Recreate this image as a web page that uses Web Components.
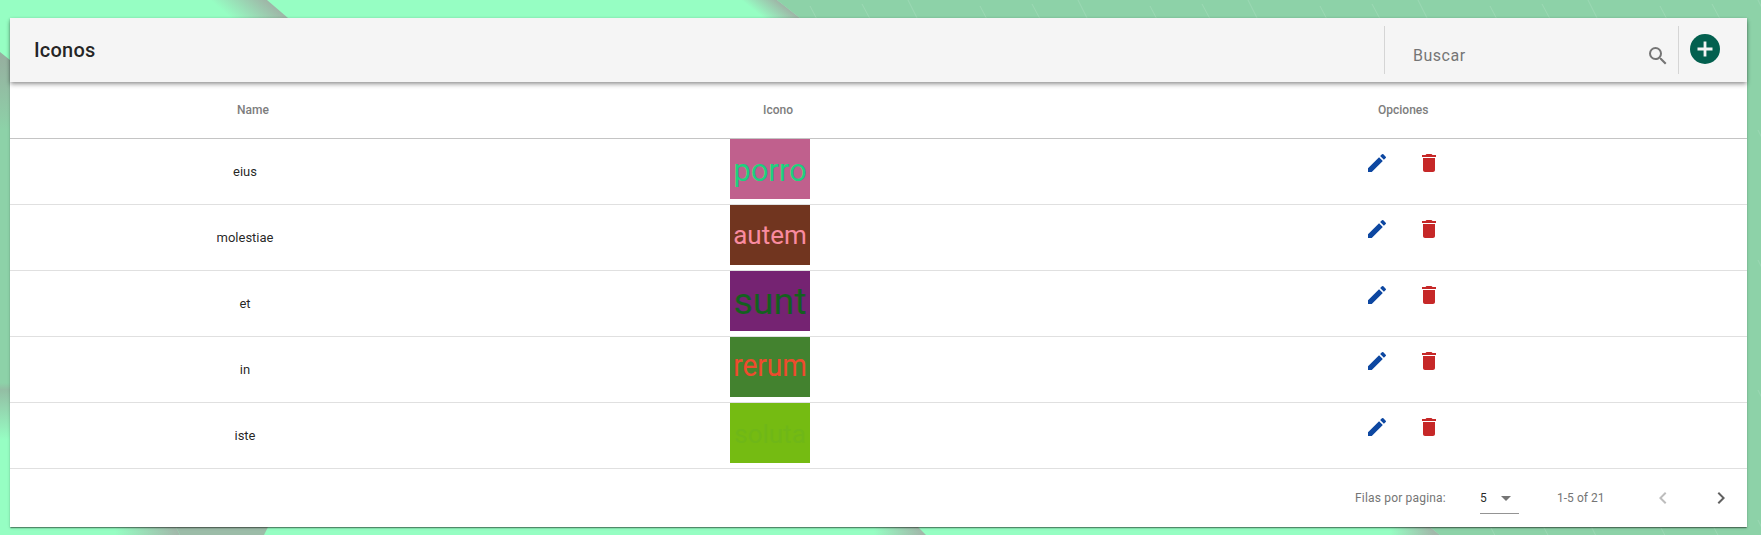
<!DOCTYPE html>
<html lang="es">
<head>
<meta charset="utf-8">
<title>Iconos</title>
<style>
html, body { margin: 0; height: 100%; }
body {
    font-family: Roboto, "Liberation Sans", sans-serif;
    overflow: hidden;
    background-color: #96fec3;
}
</style>
</head>
<body>
<page-bg>
    <icon-table title="Iconos" range="1-5 of 21">
        <icon-row name="eius" word="porro" bg="#c0608d" fg="#1fd07f" size="31"></icon-row>
        <icon-row name="molestiae" word="autem" bg="#71351f" fg="#f98ba0" size="26" dy="-1"></icon-row>
        <icon-row name="et" word="sunt" bg="#752372" fg="#14601f" size="37.5" dy="-1"></icon-row>
        <icon-row name="in" word="rerum" bg="#43822f" fg="#ee4b2d" size="28" dy="-2.5" sy="1.1"></icon-row>
        <icon-row name="iste" word="soluta" bg="#75bb12" fg="#6fb718" size="26"></icon-row>
    </icon-table>
</page-bg>
<script>
// Wallpaper behind the card
class PageBg extends HTMLElement {
    constructor() {
        super();
        this.attachShadow({ mode: 'open' });
        this.shadowRoot.innerHTML = `
            <style>
                :host {
                    display: block;
                    box-sizing: border-box;
                    width: 1761px;
                    height: 535px;
                    padding: 18px 14px 8px 10px;
                    position: relative;
                    overflow: hidden;
                    background: #96fec3;
                }
                svg { position: absolute; inset: 0; }
                slot { display: block; position: relative; }
            </style>
            <svg width="1761" height="535" viewBox="0 0 1761 535">
                <defs>
                    <linearGradient id="top1" gradientUnits="userSpaceOnUse" x1="210" y1="0" x2="234" y2="-28">
                        <stop offset="0" stop-color="#96fec3"/><stop offset="1" stop-color="#9fb5a7"/>
                    </linearGradient>
                    <linearGradient id="top2" gradientUnits="userSpaceOnUse" x1="741" y1="0" x2="755" y2="-17.5">
                        <stop offset="0" stop-color="#96fec3"/><stop offset="1" stop-color="#9fb5a7"/>
                    </linearGradient>
                    <linearGradient id="bot1" gradientUnits="userSpaceOnUse" x1="115" y1="0" x2="178" y2="0">
                        <stop offset="0" stop-color="#96fec3"/><stop offset="1" stop-color="#a2b8aa"/>
                    </linearGradient>
                    <linearGradient id="bot2" gradientUnits="userSpaceOnUse" x1="874" y1="0" x2="922" y2="0">
                        <stop offset="0" stop-color="#96fec3"/><stop offset="1" stop-color="#a2b8aa"/>
                    </linearGradient>
                    <linearGradient id="bot3" gradientUnits="userSpaceOnUse" x1="1390" y1="0" x2="1434" y2="0">
                        <stop offset="0" stop-color="#96fec3"/><stop offset="1" stop-color="#a2b8aa"/>
                    </linearGradient>
                    <linearGradient id="left" gradientUnits="userSpaceOnUse" x1="0" y1="52" x2="0" y2="440">
                        <stop offset="0" stop-color="#97ad9f"/>
                        <stop offset=".2" stop-color="#8dd2a8"/>
                        <stop offset=".853" stop-color="#8dd2a8"/>
                        <stop offset=".87" stop-color="#93bea4"/>
                        <stop offset="1" stop-color="#96fec3"/>
                    </linearGradient>
                    <pattern id="streaks" width="170" height="130" patternUnits="userSpaceOnUse">
                        <path d="M12 4l14 26M58 0l9 18M84 22l16 30M130 6l11 21M20 62l12 24M72 74l15 28M118 58l13 25M150 90l12 22" stroke="#fff" stroke-opacity=".13" fill="none"/>
                    </pattern>
                </defs>
                <polygon points="777,0 1761,0 1761,535 1440,535 1430,527 800,18" fill="#8dd2a8"/>
                <polygon points="777,0 1761,0 1761,535 1440,535 1430,527 800,18" fill="url(#streaks)"/>
                <polygon points="0,52 10,60 10,440 0,440" fill="url(#left)"/>
                <polygon points="210,0 267,0 288,18 231,18" fill="url(#top1)"/>
                <polygon points="741,0 777,0 800,18 764,18" fill="url(#top2)"/>
                <polygon points="115,527 176,527 180,535 115,535" fill="url(#bot1)"/>
                <polygon points="176,527 268,527 264,535 180,535" fill="#9cbca8"/>
                <polygon points="874,527 918,527 926,535 874,535" fill="url(#bot2)"/>
                <polygon points="1390,527 1430,527 1440,535 1390,535" fill="url(#bot3)"/>
            </svg>
            <slot></slot>
        `;
    }
}

// Toolbar + table + paginator
class IconTable extends HTMLElement {
    constructor() {
        super();
        this.attachShadow({ mode: 'open' });
    }

    connectedCallback() {
        this.shadowRoot.innerHTML = `
            <style>
                :host {
                    display: block;
                    width: 1737px;
                    background: #fff;
                    box-shadow: 0 2px 1px -1px rgba(0,0,0,.25), 0 1px 1px rgba(0,0,0,.2), 0 1px 3px rgba(0,0,0,.15);
                    color: rgba(0,0,0,.87);
                }
                .bar {
                    height: 64px;
                    box-sizing: border-box;
                    background: #f5f5f5;
                    display: flex;
                    align-items: center;
                    padding-left: 24px;
                    box-shadow: 0 2px 4px -1px rgba(0,0,0,.35), 0 3px 5px rgba(0,0,0,.18);
                    position: relative;
                }
                h1 { margin: 0; font-size: 20px; font-weight: 500; flex: 1; letter-spacing: .2px; }
                .search {
                    width: 295px;
                    height: 48px;
                    box-sizing: border-box;
                    border-left: 1px solid #d5d5d5;
                    border-right: 1px solid #d5d5d5;
                    display: flex;
                    align-items: center;
                    justify-content: space-between;
                    padding: 0 8px 0 28px;
                    font-size: 16px;
                    letter-spacing: .5px;
                    color: #757575;
                }
                .search span { margin-top: 10px; }
                .search svg { margin-top: 12px; }
                .add { width: 68px; display: flex; padding: 0 0 2px 11px; box-sizing: border-box; }
                .head {
                    display: grid;
                    grid-template-columns: 470px 609px 1fr;
                    height: 57px;
                    box-sizing: border-box;
                    align-items: center;
                    border-bottom: 1px solid #c4c4c4;
                    font-size: 12px;
                    font-weight: 500;
                    color: #7d7d7d;
                }
                .head span:nth-child(1) { padding-left: 227px; }
                .head span:nth-child(2) { padding-left: 283px; }
                .head span:nth-child(3) { padding-left: 289px; }
                .foot {
                    height: 58px;
                    display: flex;
                    align-items: center;
                    font-size: 12px;
                    color: #757575;
                    padding-left: 1345px;
                }
                .rpp { width: 125px; letter-spacing: .18px; }
                .sel {
                    width: 39px;
                    height: 32px;
                    box-sizing: border-box;
                    border-bottom: 1px solid #949494;
                    display: flex;
                    align-items: center;
                    justify-content: space-between;
                    color: rgba(0,0,0,.87);
                    margin-right: 38px;
                    padding-top: 1px;
                }
                .sel i {
                    width: 0; height: 0;
                    border: 5px solid transparent;
                    border-top-color: #757575;
                    border-bottom: 0;
                    margin-right: 8px;
                }
                .range { width: 94px; letter-spacing: .03px; }
                .pager { display: flex; gap: 34px; align-items: center; }
            </style>
            <div class="bar">
                <h1>${this.getAttribute('title')}</h1>
                <div class="search">
                    <span>Buscar</span>
                    <svg width="24" height="24" viewBox="0 0 24 24" fill="#757575"><path d="M15.5 14h-.79l-.28-.27A6.471 6.471 0 0 0 16 9.5 6.5 6.5 0 1 0 9.5 16c1.61 0 3.09-.59 4.23-1.57l.27.28v.79l5 4.99L20.49 19l-4.99-5zm-6 0C7.01 14 5 11.99 5 9.5S7.01 5 9.5 5 14 7.01 14 9.5 11.99 14 9.5 14z"/></svg>
                </div>
                <div class="add">
                    <svg width="30" height="30" viewBox="0 0 30 30"><circle cx="15" cy="15" r="15" fill="#03604f"/><path d="M13.6 7.5h2.8v6.1h6.1v2.8h-6.1v6.1h-2.8v-6.1H7.5v-2.8h6.1z" fill="#f4f4f4"/></svg>
                </div>
            </div>
            <div class="head"><span>Name</span><span>Icono</span><span>Opciones</span></div>
            <slot></slot>
            <div class="foot">
                <span class="rpp">Filas por pagina:</span>
                <div class="sel"><span>5</span><i></i></div>
                <span class="range">${this.getAttribute('range')}</span>
                <div class="pager">
                    <svg width="24" height="24" viewBox="0 0 24 24" fill="#bdbdbd"><path d="M15.41 7.41 14 6l-6 6 6 6 1.41-1.41L10.83 12z"/></svg>
                    <svg width="24" height="24" viewBox="0 0 24 24" fill="#616161"><path d="M10 6 8.59 7.41 13.17 12l-4.58 4.59L10 18l6-6z"/></svg>
                </div>
            </div>
        `;
    }
}

// One table row
class IconRow extends HTMLElement {
    constructor() {
        super();
        this.attachShadow({ mode: 'open' });
    }

    connectedCallback() {
        const a = (n) => this.getAttribute(n);
        this.shadowRoot.innerHTML = `
            <style>
                :host {
                    display: grid;
                    grid-template-columns: 470px 609px 1fr;
                    height: 66px;
                    box-sizing: border-box;
                    border-bottom: 1px solid #e0e0e0;
                    font-size: 13px;
                    color: rgba(0,0,0,.87);
                }
                .name { text-align: center; padding-top: 24px; line-height: 17px; }
                .thumb {
                    margin-left: 250px;
                    width: 80px;
                    height: 60px;
                    box-sizing: border-box;
                    padding-top: 2px;
                    display: flex;
                    align-items: center;
                    justify-content: center;
                    white-space: nowrap;
                    overflow: hidden;
                    font-size: ${a('size')}px;
                    background: ${a('bg')};
                    color: ${a('fg')};
                }
                /* the thumbnails are stretched pictures in the original, hence the per-row nudge */
                .thumb span { display: block; transform: translateY(${a('dy') || 0}px) scaleY(${a('sy') || 1}); }
                .ops { display: flex; gap: 28px; padding-left: 276px; padding-top: 12px; align-items: flex-start; }
                svg { display: block; }
            </style>
            <div class="name">${a('name')}</div>
            <div><div class="thumb"><span>${a('word')}</span></div></div>
            <div class="ops">
                <svg width="24" height="24" viewBox="0 0 24 24" fill="#0d47a1"><path d="M3 17.25V21h3.75L17.81 9.94l-3.75-3.75L3 17.25zM20.71 7.04a1 1 0 0 0 0-1.41l-2.34-2.34a1 1 0 0 0-1.41 0l-1.83 1.83 3.75 3.75 1.83-1.83z"/></svg>
                <svg width="24" height="24" viewBox="0 0 24 24" fill="#c62828"><path d="M6 19c0 1.1.9 2 2 2h8c1.1 0 2-.9 2-2V7H6v12zM19 4h-3.5l-1-1h-5l-1 1H5v2h14V4z"/></svg>
            </div>
        `;
    }
}

customElements.define('page-bg', PageBg);
customElements.define('icon-table', IconTable);
customElements.define('icon-row', IconRow);
</script>
</body>
</html>
